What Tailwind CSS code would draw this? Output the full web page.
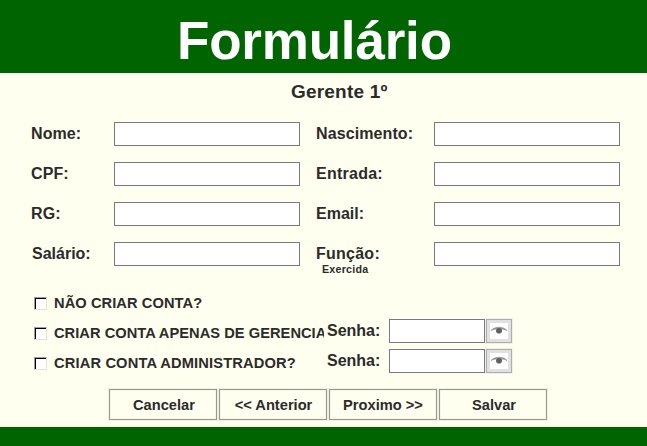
<!DOCTYPE html>
<html lang="pt">
<head>
<meta charset="utf-8">
<title>Formulário</title>
<script src="https://cdn.jsdelivr.net/npm/@tailwindcss/browser@4"></script>
</head>
<body class="w-[647px] h-[446px] overflow-hidden flex flex-col bg-[#fffff0] text-[#2b2b2b] font-bold font-['Liberation_Sans',Arial,sans-serif]">
<header class="h-[73px] shrink-0 bg-[#006400] pt-[11px] pl-[177px]">
  <h1 class="text-[53px] leading-[60px] tracking-[-0.2px] text-white whitespace-nowrap">Formulário</h1>
</header>
<main class="h-[354px] shrink-0 flex flex-col">
  <h2 class="h-[49px] pt-[7px] pl-[291px] text-[19px] leading-[24px] tracking-[0.2px]">Gerente 1º</h2>
  <form class="flex flex-col">
    <div class="grid grid-cols-[83px_186px_134px_186px] auto-rows-[24px] gap-y-4 pl-[31px] text-[16px] leading-[23px] tracking-[0.1px]">
      <label>Nome:</label><input class="bg-white border border-[#7a7a7a]">
      <label class="pl-4">Nascimento:</label><input class="bg-white border border-[#7a7a7a]">
      <label>CPF:</label><input class="bg-white border border-[#7a7a7a]">
      <label class="pl-4 tracking-[0.25px]">Entrada:</label><input class="bg-white border border-[#7a7a7a]">
      <label>RG:</label><input class="bg-white border border-[#7a7a7a]">
      <label class="pl-4 tracking-normal">Email:</label><input class="bg-white border border-[#7a7a7a]">
      <label class="pl-px tracking-normal">Salário:</label><input class="bg-white border border-[#7a7a7a]">
      <label class="pl-4 tracking-[0.25px]">Função:<span class="block -mt-[2px] pl-[6px] text-[10.67px] leading-[12px]">Exercida</span></label><input class="bg-white border border-[#7a7a7a]">
    </div>
    <div class="mt-[23px] pl-[34px] flex flex-col text-[14.67px]">
      <div class="h-[30px] flex">
        <label class="w-[290px] flex overflow-hidden whitespace-nowrap leading-[28px] tracking-[0.07px]"><span class="mt-[8px] mr-[7px] size-[13px] shrink-0 border border-t-[#a0a0a0] border-l-[#a0a0a0] border-b-[#e3e3d8] border-r-[#e3e3d8]"><span class="block size-[11px] bg-white border-t border-l border-black"></span></span>NÃO CRIAR CONTA?</label>
      </div>
      <div class="h-[30px] flex">
        <label class="w-[290px] flex overflow-hidden whitespace-nowrap leading-[28px] tracking-[0.03px]"><span class="mt-[8px] mr-[7px] size-[13px] shrink-0 border border-t-[#a0a0a0] border-l-[#a0a0a0] border-b-[#e3e3d8] border-r-[#e3e3d8]"><span class="block size-[11px] bg-white border-t border-l border-black"></span></span>CRIAR CONTA APENAS DE GERENCIA</label>
        <label class="w-[65px] pl-[3px] text-[16px] leading-[24px]">Senha:</label>
        <input class="w-[96px] h-[24px] bg-white border border-[#7a7a7a]">
        <button type="button" aria-label="Mostrar senha" class="ml-px w-[26px] h-[24px] flex items-center justify-center bg-[#e1e1e1] border border-[#adadad] shadow-[0_0_0_1px_#f0f0e8]">
          <svg class="w-[18px] h-[16px] bg-white shrink-0" viewBox="0 0 18 16" fill="none"><path d="M1 7.5C5 3.2 13 3.2 17 7.5C13 5.2 5 5.2 1 7.5Z" fill="#888" stroke="#999" stroke-width=".8"/><ellipse cx="9" cy="7.8" rx="3" ry="2.8" fill="#606060"/></svg>
        </button>
      </div>
      <div class="h-[30px] flex">
        <label class="w-[290px] flex overflow-hidden whitespace-nowrap leading-[28px]"><span class="mt-[8px] mr-[7px] size-[13px] shrink-0 border border-t-[#a0a0a0] border-l-[#a0a0a0] border-b-[#e3e3d8] border-r-[#e3e3d8]"><span class="block size-[11px] bg-white border-t border-l border-black"></span></span><span class="tracking-[0.15px]">CRIAR CONTA ADMINISTRADOR?</span></label>
        <label class="w-[65px] pl-[3px] text-[16px] leading-[24px]">Senha:</label>
        <input class="w-[96px] h-[24px] bg-white border border-[#7a7a7a]">
        <button type="button" aria-label="Mostrar senha" class="ml-px w-[26px] h-[24px] flex items-center justify-center bg-[#e1e1e1] border border-[#adadad] shadow-[0_0_0_1px_#f0f0e8]">
          <svg class="w-[18px] h-[16px] bg-white shrink-0" viewBox="0 0 18 16" fill="none"><path d="M1 7.5C5 3.2 13 3.2 17 7.5C13 5.2 5 5.2 1 7.5Z" fill="#888" stroke="#999" stroke-width=".8"/><ellipse cx="9" cy="7.8" rx="3" ry="2.8" fill="#606060"/></svg>
        </button>
      </div>
    </div>
    <div class="mt-[10px] pl-[110px] -ml-px flex gap-[2px] text-[14.67px]">
      <button type="button" class="w-[108px] h-[31px] pl-[2px] border border-[#9a9a8c] shadow-[0_0_0_1px_#f0f0e2,inset_0_0_0_1px_#f5f5e6]">Cancelar</button>
      <button type="button" class="w-[108px] h-[31px] pl-px border border-[#9a9a8c] shadow-[0_0_0_1px_#f0f0e2,inset_0_0_0_1px_#f5f5e6]">&lt;&lt; Anterior</button>
      <button type="button" class="w-[108px] h-[31px] border border-[#9a9a8c] shadow-[0_0_0_1px_#f0f0e2,inset_0_0_0_1px_#f5f5e6]">Proximo &gt;&gt;</button>
      <button type="button" class="w-[108px] h-[31px] pl-[2px] border border-[#9a9a8c] shadow-[0_0_0_1px_#f0f0e2,inset_0_0_0_1px_#f5f5e6]">Salvar</button>
    </div>
  </form>
</main>
<footer class="h-[19px] shrink-0 bg-[#006400]"></footer>
</body>
</html>
